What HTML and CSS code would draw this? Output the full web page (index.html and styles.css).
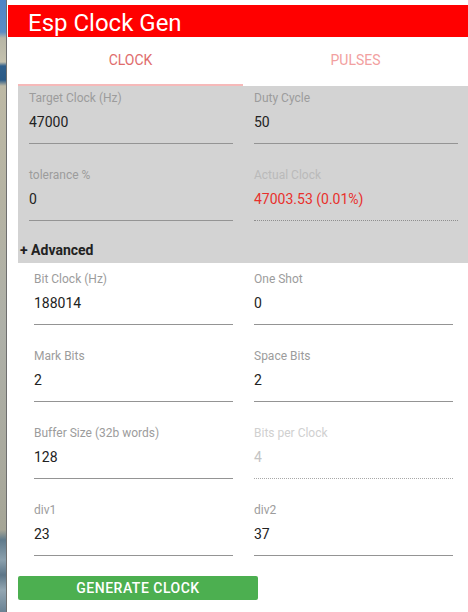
FILE: index.html
```html
<!DOCTYPE html>
<html>
<head>
<meta charset="utf-8">
<link rel="stylesheet" href="styles.css">
</head>
<body>
<div class="desk"></div>
<div class="window">
  <header class="appbar">Esp Clock Gen</header>
  <div class="content">
    <nav class="tabs">
      <div class="tab active">CLOCK</div>
      <div class="tab">PULSES</div>
    </nav>
    <section class="main-panel">
      <div class="grid">
        <div class="field">
          <div class="label">Target Clock (Hz)</div>
          <div class="value">47000</div>
        </div>
        <div class="field">
          <div class="label">Duty Cycle</div>
          <div class="value">50</div>
        </div>
        <div class="field">
          <div class="label">tolerance %</div>
          <div class="value">0</div>
        </div>
        <div class="field readonly">
          <div class="label">Actual Clock</div>
          <div class="value result">47003.53 (0.01%)</div>
        </div>
      </div>
      <div class="adv-toggle">+ Advanced</div>
    </section>
    <section class="advanced">
      <div class="grid">
        <div class="field">
          <div class="label">Bit Clock (Hz)</div>
          <div class="value">188014</div>
        </div>
        <div class="field">
          <div class="label">One Shot</div>
          <div class="value">0</div>
        </div>
        <div class="field">
          <div class="label">Mark Bits</div>
          <div class="value">2</div>
        </div>
        <div class="field">
          <div class="label">Space Bits</div>
          <div class="value">2</div>
        </div>
        <div class="field">
          <div class="label">Buffer Size (32b words)</div>
          <div class="value">128</div>
        </div>
        <div class="field readonly disabled">
          <div class="label">Bits per Clock</div>
          <div class="value">4</div>
        </div>
        <div class="field">
          <div class="label">div1</div>
          <div class="value">23</div>
        </div>
        <div class="field">
          <div class="label">div2</div>
          <div class="value">37</div>
        </div>
      </div>
    </section>
    <button class="gen">GENERATE CLOCK</button>
  </div>
</div>
</body>
</html>
```
FILE: styles.css
```css
html, body {
  margin: 0;
  height: 100%;
}
body {
  display: flex;
  overflow: hidden;
  background: #fff;
  font-family: Roboto, "Liberation Sans", Arial, sans-serif;
}
.desk {
  flex: none;
  width: 6px;
  border-right: 1px solid #6e6e6e;
  margin-right: 1px;
  background: linear-gradient(to bottom,
    #4d84c6 0px, #5a8cc4 32px,
    #b7b6a6 38px, #c4c1ae 62px,
    #2f5f8c 66px, #2a5a86 80px,
    #bdb9a5 86px, #b5b3a3 200px,
    #aeb0a8 330px, #a9a99d 470px,
    #a5a596 530px, #5f7a8b 540px,
    #8ba0ad 560px, #5d7688 575px,
    #93a6b2 590px, #6a8394 612px);
}
.window {
  flex: 1;
  padding-top: 5px;
}
.appbar {
  height: 27px;
  padding: 5px 0 0 20px;
  line-height: 27px;
  background: #ff0000;
  color: #fff;
  font-size: 24px;
}
.content {
  padding-left: 10px;
}
.tabs {
  display: flex;
}
.tab {
  flex: 1;
  height: 47px;
  line-height: 47px;
  text-align: center;
  font-size: 14px;
  color: #f2a0a0;
  border-bottom: 2px solid transparent;
}
.tab.active {
  color: #e06c6c;
  border-bottom-color: #f6b9b9;
}
.main-panel {
  background: #d3d3d3;
  padding-bottom: 3px;
}
.grid {
  display: grid;
  grid-template-columns: 1fr 1fr;
  row-gap: 19px;
}
.field {
  padding: 5px 10px 0 11px;
}
.label {
  font-size: 12px;
  line-height: 14px;
  height: 14px;
  margin-bottom: 7px;
  color: #9c9c9c;
  white-space: nowrap;
}
.value {
  font-size: 14px;
  line-height: 20px;
  padding-bottom: 11px;
  color: #222;
  border-bottom: 1px solid #949494;
}
.readonly .value {
  border-bottom: 1px dotted #8e8e8e;
}
.readonly .label {
  color: #bababa;
}
.value.result {
  color: #e8302c;
}
.disabled .label {
  color: #d0d0d0;
}
.disabled .value {
  color: #c4c4c4;
  border-bottom-color: #a8a8a8;
}
.adv-toggle {
  margin-top: 19px;
  padding-left: 2px;
  font-size: 14px;
  line-height: 20px;
  font-weight: 700;
  color: #222;
}
.advanced {
  padding: 4px 5px 0 5px;
}
.gen {
  display: block;
  width: 240px;
  height: 24px;
  margin-top: 20px;
  padding: 0;
  border: none;
  border-radius: 2px;
  background: #4caf50;
  color: #fff;
  font-family: Roboto, "Liberation Sans", Arial, sans-serif;
  font-size: 14px;
  font-weight: 500;
  letter-spacing: 0.5px;
}
```
